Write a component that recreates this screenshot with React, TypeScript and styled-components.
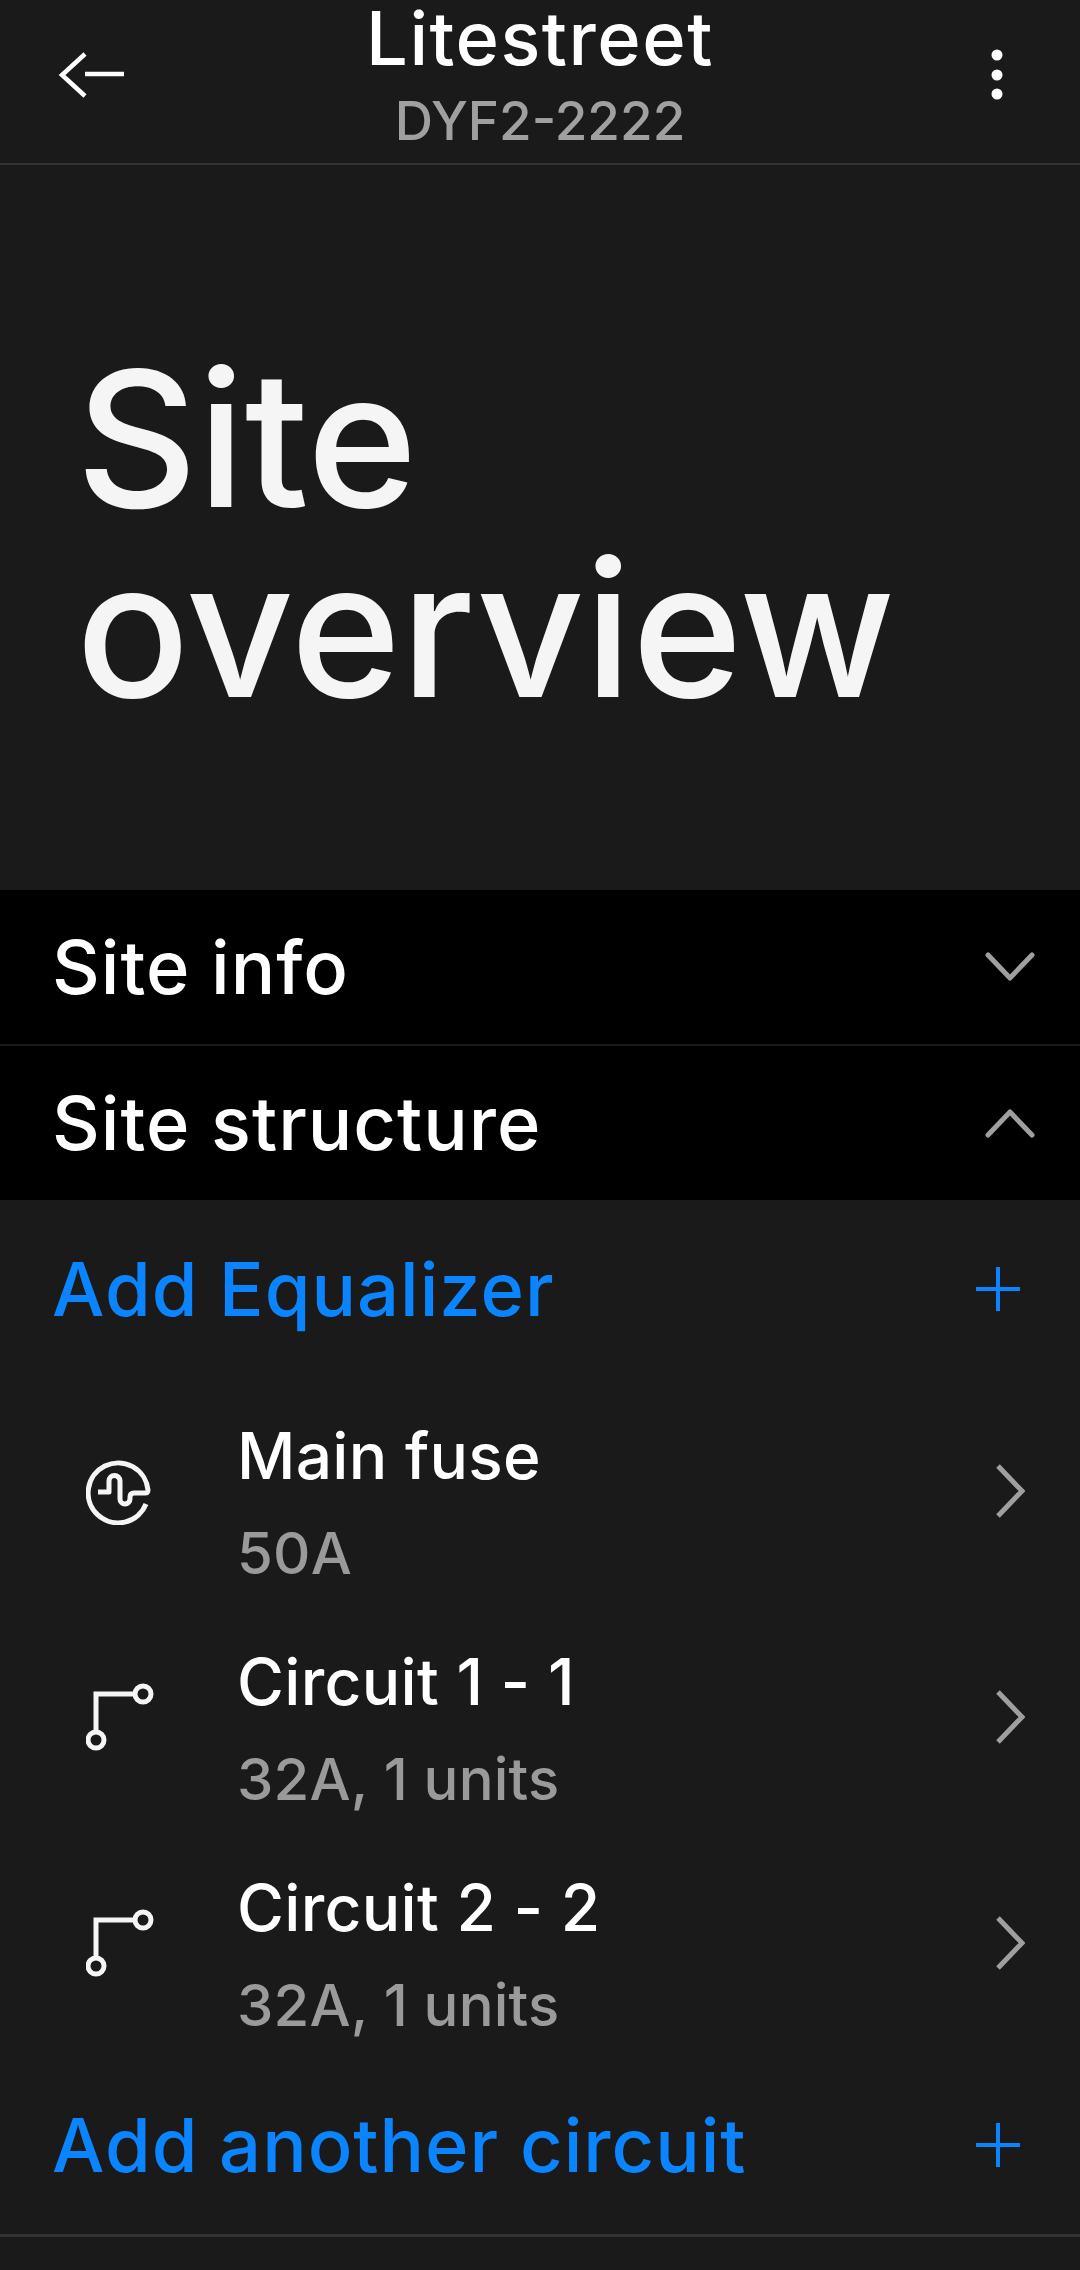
import styled, { createGlobalStyle } from 'styled-components';

const GlobalStyle = createGlobalStyle`
  html, body {
    margin: 0;
    padding: 0;
    background: #1a1a1a;
  }
  body {
    font-family: 'Inter', 'Noto Sans', sans-serif;
  }
`;

const Page = styled.div`
  width: 1080px;
  height: 2270px;
  overflow: hidden;
  background: #1a1a1a;
  color: #f5f5f5;
`;

const TopBar = styled.header`
  height: 163px;
  border-bottom: 2px solid #333333;
  display: grid;
  grid-template-columns: 160px 1fr 160px;
  align-items: center;
`;

const BackCell = styled.div`
  display: flex;
  align-items: center;
  padding-left: 58px;
  margin-bottom: 14px;
`;

const MenuCell = styled.div`
  display: flex;
  align-items: center;
  justify-content: flex-end;
  padding-right: 77px;
  margin-bottom: 14px;
`;

const TitleBlock = styled.div`
  display: flex;
  flex-direction: column;
  align-items: center;
  height: 100%;
`;

const Title = styled.div`
  font-size: 74px;
  line-height: 76px;
  font-weight: 500;
  letter-spacing: 1.5px;
  color: #ffffff;
`;

const Subtitle = styled.div`
  font-size: 53px;
  line-height: 60px;
  font-weight: 500;
  margin-top: 15px;
  color: #a0a0a0;
`;

const Hero = styled.h1`
  margin: 0;
  height: 725px;
  box-sizing: border-box;
  padding: 179px 0 0 76px;
  font-size: 188px;
  line-height: 190px;
  font-weight: 500;
  color: #f5f5f5;
`;

const SectionRow = styled.div`
  height: 154px;
  background: #000000;
  display: flex;
  align-items: center;
  justify-content: space-between;
  padding: 0 45px 0 52px;
  font-size: 74px;
  font-weight: 500;
  letter-spacing: 1px;
  color: #ffffff;
  & + & {
    margin-top: 2px;
  }
`;

const ActionRow = styled.div<{ $height: number }>`
  height: ${(p) => p.$height}px;
  display: flex;
  align-items: center;
  justify-content: space-between;
  padding: 0 60px 0 52px;
  font-size: 74px;
  font-weight: 500;
  letter-spacing: 1px;
  color: #0a84ff;
`;

const ListRow = styled.div`
  height: 226px;
  display: grid;
  grid-template-columns: 151px 1fr 60px;
  align-items: center;
  padding: 0 25px 0 86px;
`;

const RowText = styled.div`
  display: flex;
  flex-direction: column;
  gap: 21px;
  padding-top: 26px;
`;

const RowTitle = styled.div`
  font-size: 64px;
  line-height: 76px;
  font-weight: 500;
  letter-spacing: 0.3px;
  color: #ffffff;
`;

const RowSub = styled.div`
  font-size: 58px;
  line-height: 76px;
  font-weight: 500;
  letter-spacing: 0.2px;
  color: #9a9a9a;
`;

const Divider = styled.hr`
  border: none;
  height: 3px;
  margin: 0;
  background: #333333;
`;

const Icon = styled.svg`
  display: block;
  flex: none;
  fill: none;
  stroke-linecap: round;
  stroke-linejoin: round;
`;

function BackIcon() {
  return (
    <Icon width="66" height="46" viewBox="0 0 66 46" stroke="#ffffff" strokeWidth="4.5">
      <path d="M27 2 L4 23 L27 44" strokeLinejoin="miter" strokeLinecap="butt" />
      <path d="M27 22 H66" strokeLinecap="butt" />
    </Icon>
  );
}

function MenuIcon() {
  return (
    <Icon width="12" height="52" viewBox="0 0 12 52">
      <circle cx="6" cy="6" r="5.5" fill="#ffffff" />
      <circle cx="6" cy="26" r="5.5" fill="#ffffff" />
      <circle cx="6" cy="45" r="5.5" fill="#ffffff" />
    </Icon>
  );
}

function ChevronDown() {
  return (
    <Icon width="50" height="30" viewBox="0 0 50 30" stroke="#9f9f9f" strokeWidth="5">
      <path d="M3 3 L25 26 L47 3" />
    </Icon>
  );
}

function ChevronUp() {
  return (
    <Icon width="50" height="30" viewBox="0 0 50 30" stroke="#9f9f9f" strokeWidth="5">
      <path d="M3 27 L25 4 L47 27" />
    </Icon>
  );
}

function ChevronRight() {
  return (
    <Icon width="30" height="54" viewBox="0 0 30 54" stroke="#9f9f9f" strokeWidth="5">
      <path d="M3 2 L27 27 L3 52" strokeLinecap="butt" strokeLinejoin="miter" />
    </Icon>
  );
}

function PlusIcon() {
  return (
    <Icon width="44" height="44" viewBox="0 0 44 44" stroke="#0a84ff" strokeWidth="4">
      <path d="M22 0 V44 M0 22 H44" strokeLinecap="butt" />
    </Icon>
  );
}

function FuseIcon() {
  return (
    <Icon width="68" height="68" viewBox="2 0 68 68" stroke="#f5f5f5" strokeWidth="5">
      <path
        d="M62 47 A30 30 0 1 1 64 33 Q64 36 61 36 H50 Q46 36 46 40 V42 A5 5 0 0 1 36 42 V24 A5.5 5.5 0 0 0 25 24 V35 H14"
        strokeLinecap="butt"
      />
    </Icon>
  );
}

function CircuitIcon() {
  return (
    <Icon width="68" height="68" viewBox="0 0 68 68" stroke="#f5f5f5" strokeWidth="5">
      <path d="M10 48 V11 H47" strokeLinejoin="miter" strokeLinecap="butt" />
      <circle cx="57" cy="11" r="8" />
      <circle cx="10" cy="57" r="8" />
    </Icon>
  );
}

const rows = [
  { title: 'Main fuse', sub: '50A', icon: <FuseIcon /> },
  { title: 'Circuit 1 - 1', sub: '32A, 1 units', icon: <CircuitIcon /> },
  { title: 'Circuit 2 - 2', sub: '32A, 1 units', icon: <CircuitIcon /> },
];

function App() {
  return (
    <Page>
      <GlobalStyle />
      <TopBar>
        <BackCell>
          <BackIcon />
        </BackCell>
        <TitleBlock>
          <Title>Litestreet</Title>
          <Subtitle>DYF2-2222</Subtitle>
        </TitleBlock>
        <MenuCell>
          <MenuIcon />
        </MenuCell>
      </TopBar>
      <Hero>
        Site
        <br />
        overview
      </Hero>
      <SectionRow>
        Site info
        <ChevronDown />
      </SectionRow>
      <SectionRow>
        Site structure
        <ChevronUp />
      </SectionRow>
      <ActionRow $height={178}>
        Add Equalizer
        <PlusIcon />
      </ActionRow>
      {rows.map((row) => (
        <ListRow key={row.title}>
          {row.icon}
          <RowText>
            <RowTitle>{row.title}</RowTitle>
            <RowSub>{row.sub}</RowSub>
          </RowText>
          <ChevronRight />
        </ListRow>
      ))}
      <ActionRow $height={178}>
        Add another circuit
        <PlusIcon />
      </ActionRow>
      <Divider />
    </Page>
  );
}

export default App;
